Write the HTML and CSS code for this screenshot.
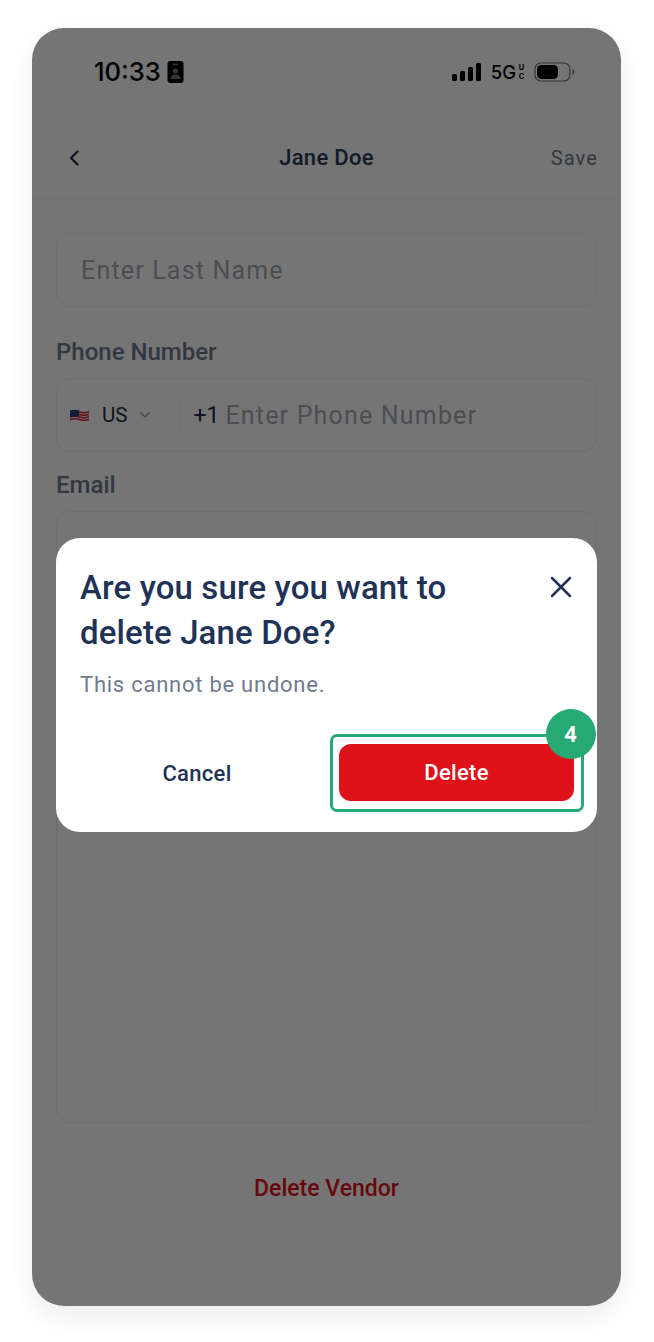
FILE: index.html
```html
<!DOCTYPE html>
<html lang="en">
<head>
<meta charset="utf-8">
<title>Jane Doe</title>
<link rel="stylesheet" href="styles.css">
</head>
<body>
<div class="phone">
  <div class="status">
    <div class="status-left">
      <span class="time">10:33</span>
      <svg class="badge-icon" width="17" height="22" viewBox="0 0 16 22"><rect width="16" height="22" rx="3" fill="#000"/><rect x="5" y="2.6" width="6" height="1.6" rx=".8" fill="#757575"/><circle cx="8" cy="10" r="2.6" fill="#757575"/><path d="M3 18c0-3 2.200-4.400 5-4.400s5 1.400 5 4.400z" fill="#757575"/></svg>
    </div>
    <div class="status-right">
      <svg width="30" height="18" viewBox="0 0 30 18"><rect x="0" y="11" width="5" height="7" rx="1.500"/><rect x="8" y="8" width="5" height="10" rx="1.500"/><rect x="16" y="4" width="5" height="14" rx="1.500"/><rect x="24" y="0" width="5" height="18" rx="1.500"/></svg>
      <span class="net">5G<span class="net-uc"><span>U</span><span>C</span></span></span>
      <svg class="battery" width="41" height="20" viewBox="0 0 41 20"><rect x="1" y="1" width="35" height="18" rx="6" fill="none" stroke="#000" stroke-opacity=".55" stroke-width="1.200"/><rect x="3" y="3" width="21" height="14" rx="4.500" fill="#000"/><path d="M38.500 7v6c1-.4 1.800-1.600 1.800-3s-.8-2.600-1.800-3z" fill="#000" fill-opacity=".55"/></svg>
    </div>
  </div>
  <header class="nav">
    <svg class="back" width="12" height="18" viewBox="0 0 12 18"><path d="M9.500 2.500 3 9l6.500 6.500" fill="none" stroke="#1e3050" stroke-width="2.400" stroke-linecap="round" stroke-linejoin="round"/></svg>
    <span class="nav-title">Jane Doe</span>
    <span class="nav-save">Save</span>
  </header>
  <main class="form">
    <div class="field"><span class="placeholder">Enter Last Name</span></div>
    <label class="label">Phone Number</label>
    <div class="field">
      <svg class="flag" width="19" height="13" viewBox="0 0 19 13"><path d="M0 1.500q5-1.500 9.500 0t9.500 0v10q-5 1.500-9.500 0t-9.500 0z" fill="#f3f3f3"/><path d="M0 3q5-1.500 9.500 0t9.500 0M0 5.500q5-1.500 9.500 0t9.500 0M0 8q5-1.500 9.500 0t9.500 0M0 10.500q5-1.500 9.500 0t9.500 0" fill="none" stroke="#d8232f" stroke-width="1.400"/><path d="M0 1.500q4-1.200 9 -.3v6.600q-5-.9-9 .2z" fill="#2b3f86"/></svg>
      <span class="country">US</span>
      <svg class="chev" width="12" height="8" viewBox="0 0 12 8"><path d="m1.500 1.500 4.500 4.500 4.500-4.500" fill="none" stroke="#9aa3b2" stroke-width="1.500" stroke-linecap="round" stroke-linejoin="round"/></svg>
      <span class="divider"></span>
      <span class="code">+1</span>
      <span class="placeholder">Enter Phone Number</span>
    </div>
    <label class="label label-email">Email</label>
    <div class="field field-tall"></div>
    <div class="danger">Delete Vendor</div>
  </main>
  <div class="overlay">
    <section class="modal">
      <div class="modal-head">
        <h2 class="modal-title">Are you sure you want to delete Jane Doe?</h2>
        <svg class="close" width="24" height="24" viewBox="0 0 24 24"><path d="m3 3 18 18M21 3 3 21" fill="none" stroke="#1f3357" stroke-width="2.500" stroke-linecap="round"/></svg>
      </div>
      <p class="modal-text">This cannot be undone.</p>
      <div class="modal-actions">
        <button class="btn btn-cancel">Cancel</button>
        <div class="highlight">
          <button class="btn btn-delete">Delete</button>
          <span class="step">4</span>
        </div>
      </div>
    </section>
  </div>
</div>
</body>
</html>
```
FILE: styles.css
```css
* { box-sizing: border-box; }
html, body { margin: 0; padding: 0; background: #fff; }
body { width: 654px; height: 1342px; overflow: hidden; font-family: Roboto, "Liberation Sans", sans-serif; padding: 28px 33px 0 32px; }
.phone { position: relative; height: 1278px; border-radius: 32px; background: #fff; box-shadow: 0 10px 28px rgba(0,0,0,.08); display: flex; flex-direction: column; }
.status { height: 88px; padding: 28px 46px 0 62px; display: flex; justify-content: space-between; align-items: flex-start; flex: none; }
.status-left { display: flex; align-items: center; gap: 6px; height: 32px; }
.time { font-family: Inter, sans-serif; font-size: 25.500px; font-weight: 500; color: #000; line-height: 32px; }
.status-right { display: flex; align-items: center; gap: 9px; height: 32px; }
.net { font-family: Inter, sans-serif; font-size: 18.500px; font-weight: 500; color: #000; display: flex; align-items: center; }
.net-uc { display: flex; flex-direction: column; align-items: center; width: 7px; font-size: 7.500px; line-height: 9.100px; font-weight: 700; margin-left: 2px; }
.nav { position: relative; height: 83px; flex: none; padding: 2px 23px 0 24px; display: flex; justify-content: space-between; align-items: center; border-bottom: 1px solid #f1f2f4; }
.back { margin-left: 12px; }
.nav-title { font-size: 22px; font-weight: 500; color: #2a3a5c; letter-spacing: .3px; position: absolute; left: 0; right: 0; top: 27px; text-align: center; line-height: 30px; }
.nav-save { font-size: 20px; font-weight: 400; color: #6e7b90; letter-spacing: 1.100px; }
.form { flex: 1; padding: 34px 24px 0; display: flex; flex-direction: column; }
.field { height: 74px; flex: none; border: 1px solid #eff0f2; border-radius: 14px; padding: 0 24px; display: flex; align-items: center; }
.field-tall { height: 612px; }
.placeholder { font-size: 25px; color: #a4abb6; letter-spacing: 1.180px; }
.label { font-size: 24px; font-weight: 500; color: #6e7b90; line-height: 30px; margin: 30px 0 11px; }
.label-email { margin-top: 18px; }
.flag { margin-left: -11px; flex: none; }
.country { font-size: 20.500px; color: #1e2c4a; margin-left: 13px; }
.chev { margin-left: 12px; }
.divider { width: 1px; height: 34px; background: #eff0f2; margin: 0 13px 0 28px; }
.code { font-size: 23px; color: #1e2c4a; margin-right: 6px; }
.danger { font-size: 23px; font-weight: 500; color: #e0111a; text-align: center; margin-top: 51px; line-height: 30px; }
.overlay { position: absolute; inset: 0; border-radius: 32px; background: rgba(0,0,0,.54); padding: 510px 24px 0; }
.modal { background: #fff; height: 294px; border-radius: 24px; padding: 27px 24px 0; display: flex; flex-direction: column; }
.modal-head { display: flex; justify-content: space-between; align-items: flex-start; }
.modal-title { margin: 0; width: 420px; font-size: 33px; font-weight: 500; letter-spacing: .13px; line-height: 45px; color: #1f3357; }
.close { margin-top: 10px; }
.modal-text { margin: 15px 0 0; font-size: 22px; line-height: 30px; color: #6f7b8f; letter-spacing: .75px; }
.modal-actions { display: flex; align-items: center; justify-content: space-between; margin-top: 34px; margin-right: -11px; }
.btn { border: 0; background: none; font-family: inherit; font-size: 22px; font-weight: 500; height: 57px; letter-spacing: .3px; }
.btn-cancel { width: 234px; color: #1f3357; text-align: center; }
.highlight { position: relative; width: 254px; height: 78px; border: 3px solid #27a974; border-radius: 7px; padding: 7px 6px; }
.btn-delete { width: 235px; background: #df1119; color: #fff; border-radius: 12px; display: block; }
.step { position: absolute; top: -28px; right: -15px; width: 50px; height: 50px; border-radius: 50%; background: #27a974; color: #fff; font-size: 22px; font-weight: 700; display: flex; align-items: center; justify-content: center; padding-right: 1px; }
```
